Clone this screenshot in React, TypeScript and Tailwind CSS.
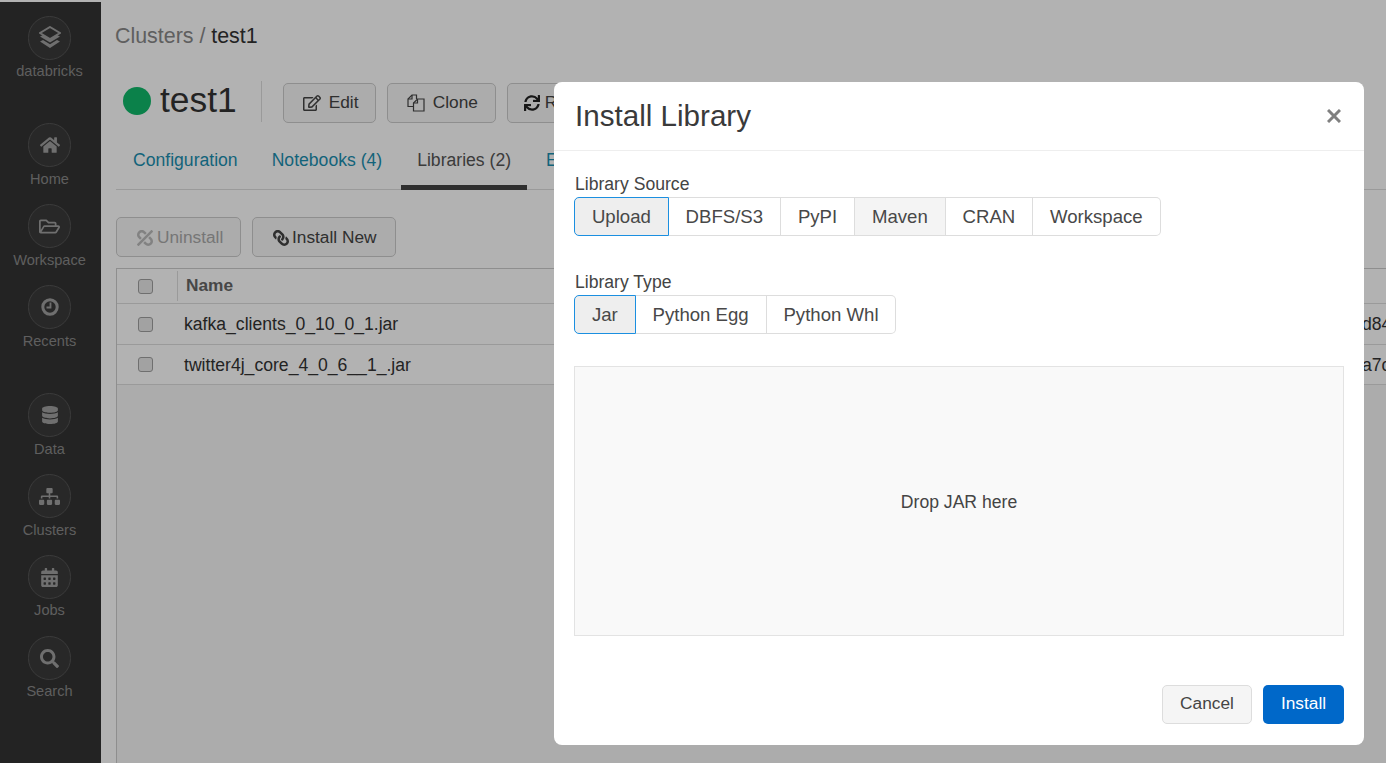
import React from "react";
import { FaHome, FaRegFolderOpen, FaDatabase, FaSitemap, FaCalendarAlt, FaSearch, FaRegEdit, FaSync, FaUnlink, FaLink } from "react-icons/fa";

const Stack = () => (
  <svg width="22" height="24" viewBox="0 0 22 24" fill="currentColor">
    <path d="M11 1 21 7 11 13 1 7Z" fill="none" stroke="currentColor" strokeWidth="2" />
    <path d="M1 10.5 4 9 11 13.3 18 9 21 10.5 11 16.5Z" />
    <path d="M1 15.5 4 14 11 18.3 18 14 21 15.5 11 22Z" />
  </svg>
);

const Clock = () => (
  <svg width="18" height="18" viewBox="0 0 18 18" fill="none" stroke="currentColor">
    <circle cx="9" cy="9" r="7.2" strokeWidth="3" />
    <path d="M9.5 4.5V9.5H5.5" strokeWidth="1.8" />
  </svg>
);

const Files = () => (
  <svg width="18" height="18" viewBox="0 0 18 18" fill="none" stroke="currentColor" strokeWidth="1.2">
    <path d="M6.5 12.5H1V5L5 1H9.5V5" />
    <path d="M5 1V5H1" />
    <path d="M6.5 17V9L10.5 5H17V17Z" />
    <path d="M10.5 5V9H6.5" />
  </svg>
);

const Cross = () => (
  <svg width="14" height="14" viewBox="0 0 14 14" stroke="#808080" strokeWidth="3" fill="none">
    <path d="M1 1 13 13M13 1 1 13" />
  </svg>
);

function NavItem({ icon, label, className = "", low = false }: { icon: React.ReactNode; label: string; className?: string; low?: boolean }) {
  return (
    <div className={`flex h-[81px] flex-col items-center ${className}`}>
      <div className="flex h-[44px] w-[43px] items-center justify-center rounded-full border border-[#555555] bg-[#3a3a3a] text-[#a0a0a0]">
        {icon}
      </div>
      <div className={`text-[14.6px] leading-[17px] text-[#888888] ${low ? "mt-[4px]" : "mt-[3px]"}`}>{label}</div>
    </div>
  );
}

function Btn({ icon, label, className = "" }: { icon: React.ReactNode; label: string; className?: string }) {
  return (
    <div className={`flex h-[40px] items-center rounded-[5px] border border-[#cccccc] bg-[#f6f6f6] text-[17.3px] text-[#444] ${className}`}>
      {icon}
      {label}
    </div>
  );
}

const Check = () => <div className="h-[15px] w-[15px] rounded-[3px] border border-[#a0a0a0] bg-[#e8e8e8]" />;

function Row({ name, tail }: { name: string; tail: string }) {
  return (
    <div className="flex h-[40.5px] items-center border-b border-[#dddddd] bg-white">
      <div className="flex w-[61px] shrink-0 justify-center pr-[4px] pt-[1px]"><Check /></div>
      <div className="w-[1184px] shrink-0 pl-[6px] pt-[1px] text-[17.6px] text-[#333]">{name}</div>
      <div className="shrink-0 whitespace-nowrap pt-[1px] text-[17.6px] text-[#333]">{tail}</div>
    </div>
  );
}

function Group({ items, selected, hovered }: { items: string[]; selected: string; hovered?: string }) {
  return (
    <div className="flex w-fit">
      {items.map((t, i) => (
        <div
          key={t}
          className={`flex h-full items-center border-y border-r px-[16.9px] py-[7.5px] text-[18.6px] leading-[22px] text-[#484848] ${
            t === selected ? "rounded-l-[5px] border-l border-[#1b8fe0] bg-[#eeeeee]" : "border-[#dddddd]"
          } ${t === hovered ? "bg-[#f4f4f4]" : ""} ${i === items.length - 1 ? "rounded-r-[5px]" : ""}`}
        >
          {t}
        </div>
      ))}
    </div>
  );
}

export default function App() {
  return (
    <div className="relative h-[763px] w-[1386px] overflow-hidden bg-white pt-[2px] font-['Liberation_Sans',Arial,sans-serif]">
      <div className="flex h-full">
        <aside className="flex w-[101px] shrink-0 flex-col bg-[#333333] pr-[2px] pt-[14px]">
          <NavItem icon={<Stack />} label="databricks" />
          <NavItem className="mt-[26px]" low icon={<FaHome size={20} />} label="Home" />
          <NavItem low icon={<FaRegFolderOpen size={21} />} label="Workspace" />
          <NavItem low icon={<Clock />} label="Recents" />
          <NavItem className="mt-[27px]" low icon={<FaDatabase size={18} />} label="Data" />
          <NavItem low icon={<FaSitemap size={21} />} label="Clusters" />
          <NavItem icon={<FaCalendarAlt size={19} />} label="Jobs" />
          <NavItem icon={<FaSearch size={19} />} label="Search" />
        </aside>

        <main className="min-w-0 flex-1 pl-[15px]">
          <div className="-ml-px mt-[19px] h-[30px] text-[21.4px] leading-[30px] text-[#888]">
            Clusters / <span className="text-[#333]">test1</span>
          </div>
          <div className="mt-[30px] flex h-[42px] items-center pl-[7px]">
            <div className="mb-[3px] h-[28px] w-[28px] rounded-full bg-[#10b96a]" />
            <div className="mb-[4px] ml-[9px] text-[35.4px] leading-[42px] text-[#333]">test1</div>
            <div className="mb-[1px] ml-[24px] h-[41px] w-px bg-[#dddddd]" />
            <Btn className="ml-[21px] mt-[2px] w-[93px] gap-[8px] pl-[19px]" icon={<FaRegEdit size={18} />} label="Edit" />
            <Btn className="ml-[11px] mt-[2px] w-[109px] gap-[8px] pl-[19px]" icon={<Files />} label="Clone" />
            <Btn className="ml-[11px] mt-[2px] w-[120px] gap-[5px] pl-[16px]" icon={<FaSync size={16} className="text-[#222]" />} label="Restart" />
          </div>
          <div className="mt-[16px] flex h-[51px] items-stretch border-b border-[#dddddd] text-[17.6px] leading-[43px]">
            <div className="px-[17px] text-[#1a8fb0]">Configuration</div>
            <div className="pl-[17px] pr-[19px] text-[#1a8fb0]">Notebooks (4)</div>
            <div className="-mb-px border-b-[5px] border-[#444] px-[16px] text-[#555]">Libraries (2)</div>
            <div className="px-[19px] text-[#1a8fb0]">Event Log</div>
          </div>
          <div className="mt-[27px] flex gap-[11px]">
            <Btn className="w-[125px] gap-[4px] pl-[20px] pt-[1px] text-[#aaaaaa]" icon={<FaUnlink size={16} className="-scale-x-100 text-[#bbbbbb]" />} label="Uninstall" />
            <Btn className="w-[144px] gap-[3px] pl-[20px] pt-[1px] text-[#333]" icon={<FaLink size={16} className="-scale-x-100" />} label="Install New" />
          </div>
          <div className="mt-[11px] h-[600px] border-l border-t border-[#cccccc] bg-[#f6f6f6]">
            <div className="flex h-[35px] items-center border-b border-[#dddddd] bg-white">
              <div className="flex h-[30px] w-[61px] shrink-0 items-center justify-center border-r border-[#dddddd] pr-[3px]"><Check /></div>
              <div className="pl-[8px] text-[17.3px] font-bold text-[#666]">Name</div>
            </div>
            <Row name="kafka_clients_0_10_0_1.jar" tail="d84f" />
            <Row name="twitter4j_core_4_0_6__1_.jar" tail="a7cd" />
          </div>
        </main>
      </div>

      <div className="absolute inset-0 bg-black/30" />

      <div className="absolute left-[554px] top-[82px] flex h-[663px] w-[810px] flex-col rounded-[8px] bg-white">
        <div className="flex h-[69px] items-center justify-between border-b border-[#eeeeee] pl-[21px] pr-[23px]">
          <div className="text-[29.6px] leading-[34px] text-[#3a3a3a]">Install Library</div>
          <Cross />
        </div>
        <div className="flex-1 px-[20px] pt-[23px]">
          <div className="pl-px text-[17.6px] leading-[21px] text-[#444]">Library Source</div>
          <div className="mt-[2px]"><Group items={["Upload", "DBFS/S3", "PyPI", "Maven", "CRAN", "Workspace"]} selected="Upload" hovered="Maven" /></div>
          <div className="mt-[36px] pl-px text-[17.6px] leading-[21px] text-[#444]">Library Type</div>
          <div className="mt-[2px]"><Group items={["Jar", "Python Egg", "Python Whl"]} selected="Jar" /></div>
          <div className="mt-[32px] flex h-[270px] items-center justify-center border border-[#e3e3e3] bg-[#f9f9f9] pt-[3px] text-[17.6px] text-[#444]">
            Drop JAR here
          </div>
        </div>
        <div className="flex justify-end gap-[11px] px-[20px] pb-[21px]">
          <div className="flex h-[39px] w-[90px] items-center justify-center rounded-[5px] border border-[#dddddd] bg-[#f5f5f5] pb-[1px] text-[17.3px] text-[#444]">Cancel</div>
          <div className="flex h-[39px] w-[81px] items-center justify-center rounded-[5px] bg-[#0068c9] pb-[1px] text-[17.3px] text-white">Install</div>
        </div>
      </div>
    </div>
  );
}
